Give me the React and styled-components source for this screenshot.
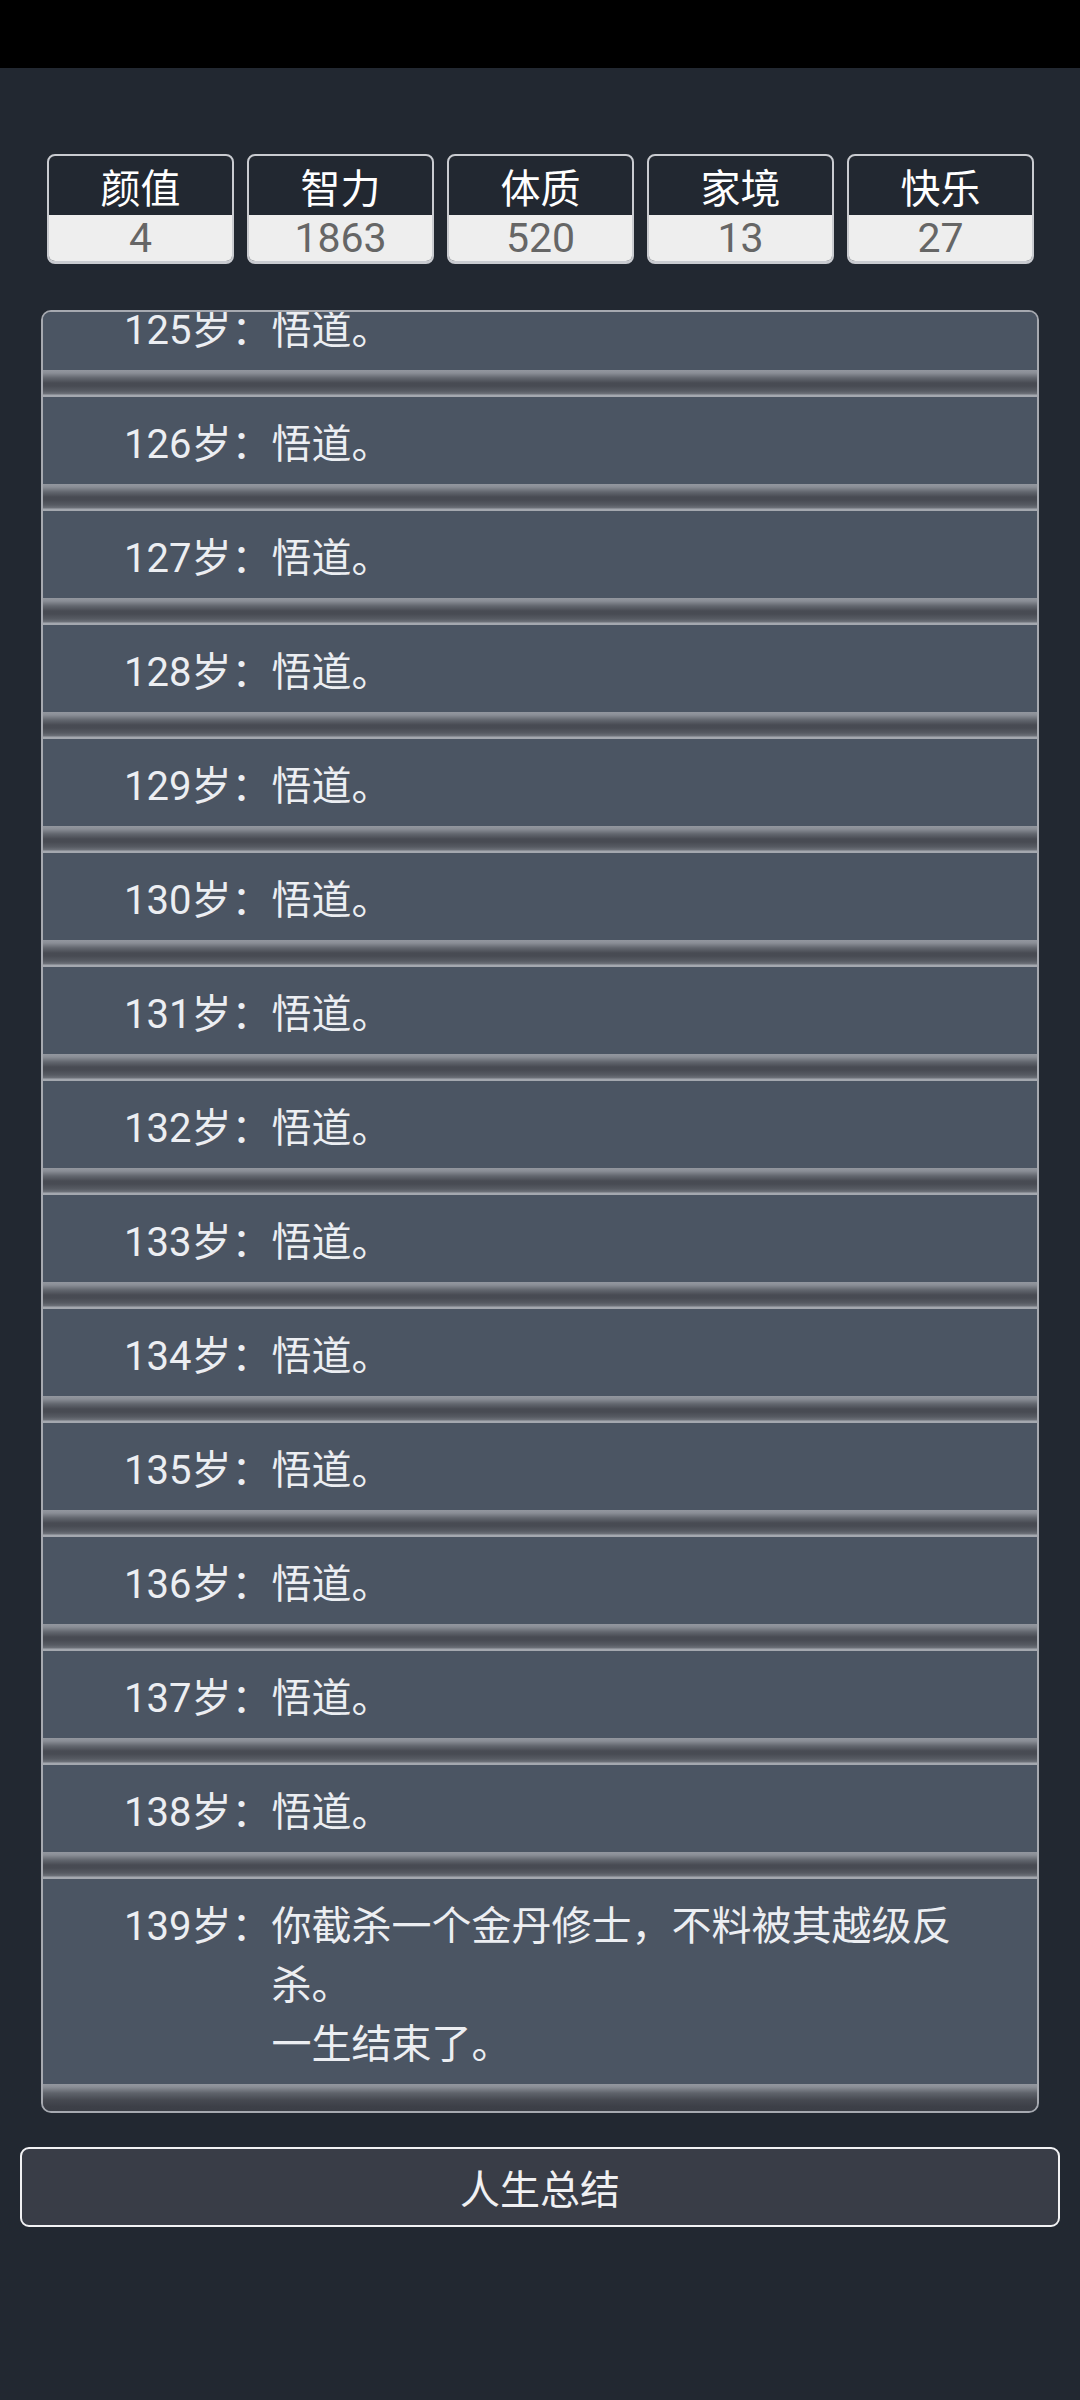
import React from "react";
import styled, { createGlobalStyle } from "styled-components";

const Global = createGlobalStyle`
  html, body {
    margin: 0;
    padding: 0;
    background: #222831;
  }
  body {
    font-family: Roboto, "Noto Sans CJK SC", "Noto Sans", sans-serif;
    color: #e8eaee;
  }
  * { box-sizing: border-box; }
`;

const Page = styled.div`
  width: 1080px;
  min-height: 2400px;
  display: flex;
  flex-direction: column;
`;

const StatusBar = styled.div`
  height: 68px;
  background: #000;
  flex-shrink: 0;
`;

const StatsRow = styled.div`
  display: flex;
  gap: 13px;
  padding: 0 46px 0 47px;
  margin-top: 86px;
`;

const StatCard = styled.div`
  flex: 1;
  height: 110px;
  border: 2px solid #c9cbd0;
  border-bottom-width: 3px;
  border-radius: 8px;
  overflow: hidden;
  display: flex;
  flex-direction: column;
  background: #222831;
`;

const StatLabel = styled.div`
  height: 59px;
  display: flex;
  align-items: center;
  justify-content: center;
  font-size: 40px;
  color: #ffffff;
  font-family: "Noto Sans CJK SC", sans-serif;
`;

const StatValue = styled.div`
  flex: 1;
  background: #eeeeee;
  color: #666666;
  font-size: 41px;
  display: flex;
  align-items: center;
  justify-content: center;
  line-height: 1;
  font-family: Roboto, sans-serif;
`;

const Panel = styled.div`
  margin: 46px 41px 0 41px;
  height: 1803px;
  border: 2px solid #a6a9b0;
  border-radius: 10px;
  overflow: hidden;
  background: #4b5563;
  display: flex;
  flex-direction: column;
  justify-content: flex-end;
`;

const Entry = styled.div`
  flex-shrink: 0;
  display: flex;
  flex-direction: column;
`;

const EntryBody = styled.div`
  display: flex;
  padding: 18px 44px 10px 81px;
  background: #4b5563;
  font-size: 40px;
  line-height: 59px;
  color: #eceef2;
`;

const Age = styled.span`
  white-space: nowrap;
  flex-shrink: 0;
`;

const EntryText = styled.div`
  flex: 1;
`;

const Groove = styled.div`
  height: 27px;
  background: ${(p) =>
    p.$last
      ? `linear-gradient(to bottom, #93979f 0px, #8a8e96 3px, #5f636b 9px, #464951 16px, #3d4048 22px, #3b3e46 27px)`
      : `linear-gradient(to bottom, #93979f 0px, #8a8e96 3px, #62666e 8px, #484b53 13px, #484b53 16px, #575b63 21px, #6e727a 24px, #a4a8af 25px, #a4a8af 27px)`};
`;

const SummaryButton = styled.button`
  margin: 34px 20px 0 20px;
  height: 80px;
  background: #393d47;
  border: 2px solid #f2f2f4;
  border-radius: 9px;
  color: #f0f0f2;
  font-size: 40px;
  font-family: "Noto Sans CJK SC", sans-serif;
  display: flex;
  align-items: center;
  justify-content: center;
  padding: 0;
  cursor: pointer;
`;

const stats = [
  { label: "颜值", value: 4 },
  { label: "智力", value: 1863 },
  { label: "体质", value: 520 },
  { label: "家境", value: 13 },
  { label: "快乐", value: 27 },
];

const entries = [];
for (let a = 125; a <= 138; a++) {
  entries.push({ age: a, lines: ["悟道。"] });
}
entries.push({
  age: 139,
  lines: ["你截杀一个金丹修士，不料被其越级反杀。", "一生结束了。"],
});

export default function App() {
  return (
    <>
      <Global />
      <Page>
        <StatusBar />
        <StatsRow>
          {stats.map((s) => (
            <StatCard key={s.label}>
              <StatLabel>{s.label}</StatLabel>
              <StatValue>{s.value}</StatValue>
            </StatCard>
          ))}
        </StatsRow>
        <Panel>
          {entries.map((e, i) => (
            <Entry key={e.age}>
              <EntryBody>
                <Age>{e.age}岁：</Age>
                <EntryText>
                  {e.lines.map((l, j) => (
                    <div key={j}>{l}</div>
                  ))}
                </EntryText>
              </EntryBody>
              <Groove $last={i === entries.length - 1} />
            </Entry>
          ))}
        </Panel>
        <SummaryButton>人生总结</SummaryButton>
      </Page>
    </>
  );
}
